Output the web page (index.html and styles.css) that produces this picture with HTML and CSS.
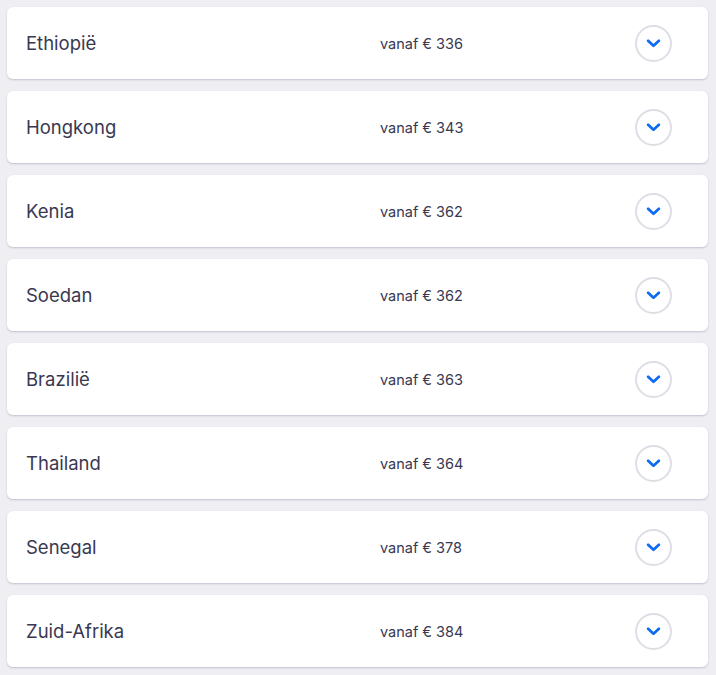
FILE: index.html
```html
<!DOCTYPE html>
<html lang="nl">
<head>
<meta charset="utf-8">
<title>Bestemmingen</title>
<link rel="stylesheet" href="styles.css">
</head>
<body>
<ul class="list">
  <li class="card"><span class="name">Ethiopië</span><span class="price">vanaf € 336</span><button class="toggle" aria-label="Uitklappen"><svg viewBox="0 0 16 10" width="15" height="9"><path d="M2 2l6 5.5L14 2" fill="none" stroke="currentColor" stroke-width="3" stroke-linecap="round" stroke-linejoin="round"/></svg></button></li>
  <li class="card"><span class="name">Hongkong</span><span class="price">vanaf € 343</span><button class="toggle" aria-label="Uitklappen"><svg viewBox="0 0 16 10" width="15" height="9"><path d="M2 2l6 5.5L14 2" fill="none" stroke="currentColor" stroke-width="3" stroke-linecap="round" stroke-linejoin="round"/></svg></button></li>
  <li class="card"><span class="name">Kenia</span><span class="price">vanaf € 362</span><button class="toggle" aria-label="Uitklappen"><svg viewBox="0 0 16 10" width="15" height="9"><path d="M2 2l6 5.5L14 2" fill="none" stroke="currentColor" stroke-width="3" stroke-linecap="round" stroke-linejoin="round"/></svg></button></li>
  <li class="card"><span class="name">Soedan</span><span class="price">vanaf € 362</span><button class="toggle" aria-label="Uitklappen"><svg viewBox="0 0 16 10" width="15" height="9"><path d="M2 2l6 5.5L14 2" fill="none" stroke="currentColor" stroke-width="3" stroke-linecap="round" stroke-linejoin="round"/></svg></button></li>
  <li class="card"><span class="name">Brazilië</span><span class="price">vanaf € 363</span><button class="toggle" aria-label="Uitklappen"><svg viewBox="0 0 16 10" width="15" height="9"><path d="M2 2l6 5.5L14 2" fill="none" stroke="currentColor" stroke-width="3" stroke-linecap="round" stroke-linejoin="round"/></svg></button></li>
  <li class="card"><span class="name">Thailand</span><span class="price">vanaf € 364</span><button class="toggle" aria-label="Uitklappen"><svg viewBox="0 0 16 10" width="15" height="9"><path d="M2 2l6 5.5L14 2" fill="none" stroke="currentColor" stroke-width="3" stroke-linecap="round" stroke-linejoin="round"/></svg></button></li>
  <li class="card"><span class="name">Senegal</span><span class="price">vanaf € 378</span><button class="toggle" aria-label="Uitklappen"><svg viewBox="0 0 16 10" width="15" height="9"><path d="M2 2l6 5.5L14 2" fill="none" stroke="currentColor" stroke-width="3" stroke-linecap="round" stroke-linejoin="round"/></svg></button></li>
  <li class="card"><span class="name">Zuid-Afrika</span><span class="price">vanaf € 384</span><button class="toggle" aria-label="Uitklappen"><svg viewBox="0 0 16 10" width="15" height="9"><path d="M2 2l6 5.5L14 2" fill="none" stroke="currentColor" stroke-width="3" stroke-linecap="round" stroke-linejoin="round"/></svg></button></li>
</ul>
</body>
</html>
```
FILE: styles.css
```css
html, body {
  margin: 0;
  background: #eeeef3;
}
body {
  padding: 7px 8px 8px 7px;
  font-family: Inter, "Noto Sans", "Liberation Sans", sans-serif;
  color: #3a3851;
}
.list {
  list-style: none;
  margin: 0;
  padding: 0;
  display: flex;
  flex-direction: column;
  gap: 12px;
}
.card {
  display: flex;
  align-items: center;
  height: 72px;
  box-sizing: border-box;
  padding: 0 36px 0 19px;
  background: #ffffff;
  border-radius: 6px;
  box-shadow: 0 1px 2px rgba(40, 40, 70, 0.22);
}
.name {
  width: 354px;
  flex: none;
  font-size: 18.5px;
  font-weight: 400;
}
.price {
  flex: 1;
  font-size: 14.5px;
}
.toggle {
  flex: none;
  width: 37px;
  height: 37px;
  box-sizing: border-box;
  border: 2px solid #dedee6;
  border-radius: 50%;
  background: #fff;
  color: #0d6af2;
  padding: 0;
  display: flex;
  align-items: center;
  justify-content: center;
}
.toggle svg {
  display: block;
  margin-top: 1px;
}
```
